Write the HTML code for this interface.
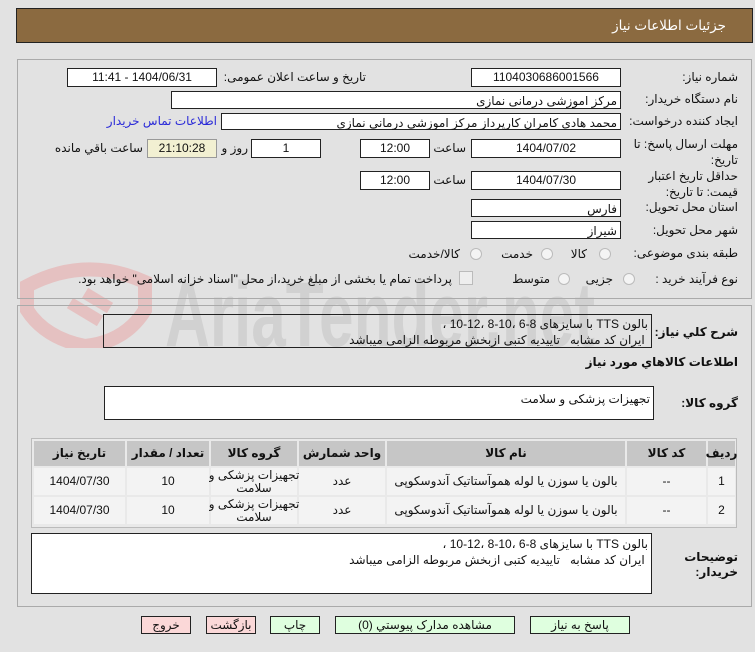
<!DOCTYPE html>
<html><head><meta charset="utf-8"><style>
body{margin:0;width:755px;height:652px;background:#e2e2e2;font-family:"Liberation Sans","DejaVu Sans",sans-serif;font-size:12px;color:#111;position:relative;overflow:hidden}
.a{position:absolute}
.hdr{left:16px;top:8px;width:737px;height:35px;background:#8b6a40;border:1px solid #222;box-sizing:border-box}
.hdr span{position:absolute;right:26px;top:9px;color:#fff;font-size:13.5px}
.pan{border:1px solid #aaa;box-sizing:border-box}
.box{background:#fff;border:1px solid #222;box-sizing:border-box;text-align:center;line-height:17px;direction:rtl}
.lbl{direction:rtl;text-align:right;white-space:nowrap}
.r{background:#fff;border:1px solid #222;box-sizing:border-box;direction:rtl;text-align:right;padding:1px 3px;line-height:16px}
.rad{width:10px;height:10px;border:1px solid #bbb;border-radius:50%;background:#f4f4f4}
.c{position:absolute;display:flex;align-items:center;justify-content:center;text-align:center;direction:rtl;white-space:nowrap;line-height:13px}
.h{background:#c6c6c6;font-weight:bold;top:441px;height:25px}
.d{background:#f3f3f3;height:27px}
.btn{border:1px solid #222;box-sizing:border-box;height:18px;text-align:center;line-height:16px;background:#dfffdf;direction:rtl}
</style></head><body>
<div class="a hdr"><span>جزئیات اطلاعات نیاز</span></div>
<svg class="a" style="left:15px;top:258px;opacity:.8" width="590" height="90">
<path d="M12 28 Q70 -3 130 24 L130 52 Q110 84 70 88 Q30 80 12 52Z" fill="none" stroke="#e6b9b9" stroke-width="14"/>
<path d="M55 45 L85 63 M70 35 L95 50" stroke="#e6b9b9" stroke-width="12"/>
<text x="150" y="88" font-size="92" font-weight="bold" font-family="Liberation Sans Narrow,Liberation Sans" fill="#cdcdcd" textLength="430" lengthAdjust="spacingAndGlyphs">AriaTender.net</text>
</svg>
<div class="a pan" style="left:17px;top:59px;width:735px;height:240px"></div>
<div class="a pan" style="left:17px;top:305px;width:735px;height:302px"></div>

<div class="a lbl" style="right:17px;top:70px">شماره نیاز:</div>
<div class="a box" style="left:471px;top:68px;width:150px;height:19px">1104030686001566</div>
<div class="a lbl" style="right:389px;top:70px">تاریخ و ساعت اعلان عمومی:</div>
<div class="a box" style="left:67px;top:68px;width:150px;height:19px">1404/06/31 - 11:41</div>

<div class="a lbl" style="right:17px;top:92px">نام دستگاه خریدار:</div>
<div class="a r" style="left:171px;top:91px;width:450px;height:18px">مرکز اموزشی درمانی نمازی</div>

<div class="a lbl" style="right:17px;top:114px">ایجاد کننده درخواست:</div>
<div class="a r" style="left:221px;top:113px;width:400px;height:17px">محمد هادی کامران کارپرداز مرکز اموزشی درمانی نمازی</div>
<div class="a lbl" style="right:538px;top:114px;color:#2a2ad8">اطلاعات تماس خریدار</div>

<div class="a lbl" style="right:17px;top:136px;line-height:16px">مهلت ارسال پاسخ: تا<br>تاریخ:</div>
<div class="a box" style="left:471px;top:139px;width:150px;height:19px">1404/07/02</div>
<div class="a lbl" style="right:289px;top:141px">ساعت</div>
<div class="a box" style="left:360px;top:139px;width:70px;height:19px">12:00</div>
<div class="a box" style="left:251px;top:139px;width:70px;height:19px">1</div>
<div class="a lbl" style="right:507px;top:141px">روز و</div>
<div class="a box" style="left:147px;top:139px;width:70px;height:19px;background:#f2f0d2;border-color:#999">21:10:28</div>
<div class="a lbl" style="right:612px;top:141px">ساعت باقي مانده</div>

<div class="a lbl" style="right:17px;top:168px;line-height:16px">حداقل تاریخ اعتبار<br>قیمت: تا تاریخ:</div>
<div class="a box" style="left:471px;top:171px;width:150px;height:19px">1404/07/30</div>
<div class="a lbl" style="right:289px;top:173px">ساعت</div>
<div class="a box" style="left:360px;top:171px;width:70px;height:19px">12:00</div>

<div class="a lbl" style="right:17px;top:200px">استان محل تحویل:</div>
<div class="a r" style="left:471px;top:199px;width:150px;height:18px">فارس</div>
<div class="a lbl" style="right:17px;top:223px">شهر محل تحویل:</div>
<div class="a r" style="left:471px;top:221px;width:150px;height:18px">شیراز</div>

<div class="a lbl" style="right:17px;top:246px">طبقه بندی موضوعی:</div>
<div class="a rad" style="left:599px;top:248px"></div><div class="a lbl" style="right:168px;top:247px">کالا</div>
<div class="a rad" style="left:541px;top:248px"></div><div class="a lbl" style="right:222px;top:247px">خدمت</div>
<div class="a rad" style="left:470px;top:248px"></div><div class="a lbl" style="right:295px;top:247px">کالا/خدمت</div>

<div class="a lbl" style="right:17px;top:272px">نوع فرآیند خرید :</div>
<div class="a rad" style="left:623px;top:273px"></div><div class="a lbl" style="right:142px;top:272px">جزیی</div>
<div class="a rad" style="left:558px;top:273px"></div><div class="a lbl" style="right:205px;top:272px">متوسط</div>
<div class="a" style="left:459px;top:271px;width:12px;height:12px;border:1px solid #bbb;background:#eee"></div>
<div class="a lbl" style="right:303px;top:272px">پرداخت تمام یا بخشی از مبلغ خرید،از محل "اسناد خزانه اسلامی" خواهد بود.</div>

<div class="a lbl" style="right:17px;top:325px;font-weight:bold">شرح کلي نياز:</div>
<div class="a r" style="left:103px;top:314px;width:549px;height:34px;background:transparent">بالون TTS با سایزهای 8-6 ،10-8 ،12-10 ،<br>&nbsp;ایران کد مشابه &nbsp; تاییدیه کتبی ازبخش مربوطه الزامی میباشد</div>
<div class="a lbl" style="right:17px;top:355px;font-weight:bold">اطلاعات کالاهاي مورد نياز</div>

<div class="a lbl" style="right:17px;top:396px;font-weight:bold">گروه کالا:</div>
<div class="a r" style="left:104px;top:386px;width:550px;height:34px;padding-top:4px">تجهیزات پزشکی و سلامت</div>

<div class="a" style="left:31px;top:438px;width:706px;height:90px;border:1px solid #bbb;box-sizing:border-box;background:#e9e9e9"></div>
<div class="c h" style="left:708px;width:27px">ردیف</div>
<div class="c h" style="left:627px;width:79px">کد کالا</div>
<div class="c h" style="left:387px;width:238px">نام کالا</div>
<div class="c h" style="left:299px;width:86px">واحد شمارش</div>
<div class="c h" style="left:211px;width:86px">گروه کالا</div>
<div class="c h" style="left:127px;width:82px">تعداد / مقدار</div>
<div class="c h" style="left:34px;width:91px">تاریخ نیاز</div>

<div class="c d" style="top:468px;left:708px;width:27px">1</div>
<div class="c d" style="top:468px;left:627px;width:79px">--</div>
<div class="c d" style="top:468px;left:387px;width:238px">بالون یا سوزن یا لوله هموآستاتیک آندوسکوپی</div>
<div class="c d" style="top:468px;left:299px;width:86px">عدد</div>
<div class="c d" style="top:468px;left:211px;width:86px">تجهیزات پزشکی و<br>سلامت</div>
<div class="c d" style="top:468px;left:127px;width:82px">10</div>
<div class="c d" style="top:468px;left:34px;width:91px">1404/07/30</div>

<div class="c d" style="top:497px;left:708px;width:27px">2</div>
<div class="c d" style="top:497px;left:627px;width:79px">--</div>
<div class="c d" style="top:497px;left:387px;width:238px">بالون یا سوزن یا لوله هموآستاتیک آندوسکوپی</div>
<div class="c d" style="top:497px;left:299px;width:86px">عدد</div>
<div class="c d" style="top:497px;left:211px;width:86px">تجهیزات پزشکی و<br>سلامت</div>
<div class="c d" style="top:497px;left:127px;width:82px">10</div>
<div class="c d" style="top:497px;left:34px;width:91px">1404/07/30</div>

<div class="a lbl" style="right:17px;top:550px;font-weight:bold;line-height:15px">توضیحات<br>خریدار:</div>
<div class="a r" style="left:31px;top:533px;width:621px;height:61px;padding-top:2px">بالون TTS با سایزهای 8-6 ،10-8 ،12-10 ،<br>&nbsp;ایران کد مشابه &nbsp; تاییدیه کتبی ازبخش مربوطه الزامی میباشد</div>

<div class="a btn" style="left:141px;top:616px;width:50px;background:#fbd8d8">خروج</div>
<div class="a btn" style="left:206px;top:616px;width:50px;background:#fbd8d8">بازگشت</div>
<div class="a btn" style="left:270px;top:616px;width:50px">چاپ</div>
<div class="a btn" style="left:335px;top:616px;width:180px">مشاهده مدارک پیوستي (0)</div>
<div class="a btn" style="left:530px;top:616px;width:100px">پاسخ به نیاز</div>
</body></html>
